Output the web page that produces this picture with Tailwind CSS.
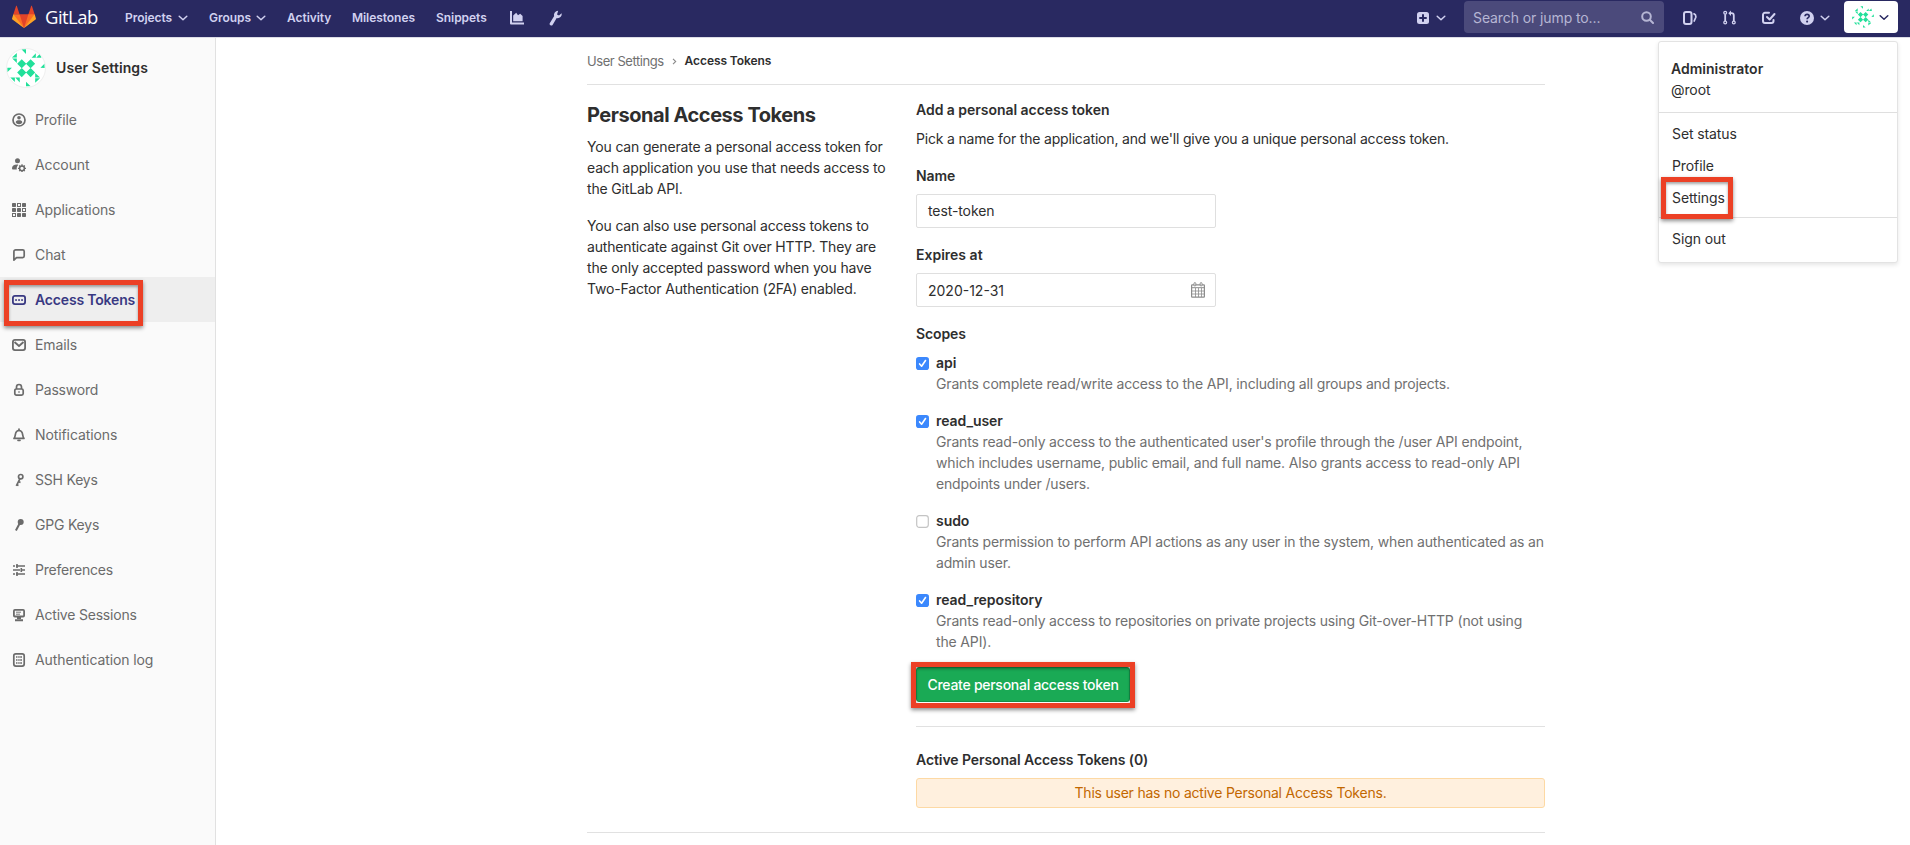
<!DOCTYPE html>
<html lang="en">
<head>
<meta charset="utf-8">
<title>Access Tokens · User Settings · GitLab</title>
<script src="https://cdn.jsdelivr.net/npm/@tailwindcss/browser@4"></script>
</head>
<body class="relative h-[845px] w-[1910px] overflow-hidden bg-white font-['Inter','Liberation_Sans',sans-serif] text-sm leading-[21px] tracking-[-0.1px] text-[#2e2e2e]">

<svg class="hidden">
  <symbol id="chev" viewBox="0 0 10 6"><path d="M1.2 1.2 5 4.7 8.8 1.2" fill="none" stroke="currentColor" stroke-width="1.5" stroke-linecap="round" stroke-linejoin="round"/></symbol>
  <symbol id="identicon" viewBox="0 0 116 116">
    <circle cx="58" cy="58" r="57.5" fill="#fff"/>
    <g fill="#22e09a">
      <path d="M45 31l14 14-14 14-14-14zM72 31l14 14-14 14-14-14zM45 58l14 14-14 14-14-14zM72 58l14 14-14 14-14-14z"/>
      <path d="M44 1h14v14zM30 12v14H15zM16 29h14v14zM75 27l13-14v14zM89 27l13-14 3 14zM102 57l13-13v14zM1 57h14L1 71zM10 87h14v14zM25 87h14v15zM86 73l15 14H86zM86 89l15 0-15 14zM58 100l14 14H58z"/>
    </g>
  </symbol>
</svg>

<header class="flex h-[38px] items-start border-b border-[#dcdce6] bg-[#292961] text-[#d1d1f0]">
  <div class="flex h-[37px] w-full items-center pl-3 pr-3">
    <svg class="mb-1 h-6 w-6" viewBox="0 0 36 36"><path fill="#e24329" d="M2 14l9.38 9v-9l-4-12.28c-.205-.632-1.176-.632-1.38 0zM34 14l-9.38 9v-9l4-12.28c.205-.632 1.176-.632 1.38 0zM18 34.38 3 14h30z"/><path fill="#fc6d26" d="M18 34.38 11.38 14H2l4 11zM18 34.38 24.62 14H34l-4 11z"/><path fill="#fca326" d="M2 14 .1 20.16c-.18.565 0 1.2.5 1.56L18.02 34.38zM34 14l1.9 6.16c.18.565 0 1.2-.5 1.56L18 34.38z"/></svg>
    <span class="ml-[9px] w-[80px] whitespace-nowrap pb-[4px] font-['Open_Sans',sans-serif] text-[18.5px] tracking-[-0.55px] text-white">GitLab</span>
    <nav class="flex flex-1 items-center whitespace-nowrap pb-[2px] text-xs font-semibold tracking-[-0.05px]">
      <a class="w-[53px]">Projects</a><svg class="mr-[21px] h-[6px] w-[10px]"><use href="#chev"/></svg>
      <a class="w-[47px]">Groups</a><svg class="mr-[21px] h-[6px] w-[10px]"><use href="#chev"/></svg>
      <a class="w-[65px]">Activity</a>
      <a class="w-[84px]">Milestones</a>
      <a class="w-[74px]">Snippets</a>
      <svg class="mr-[25px] h-[14px] w-[14px]" viewBox="0 0 14 14" fill="currentColor"><path d="M0 0h2v11.5h12v2H1A1 1 0 0 1 0 12.500z"/><path d="M3.200 10.300V4.500l3-2.700 1.800 2.400 2.200-1.400L12.600 5v5.300z"/></svg>
      <svg class="h-[16px] w-[13px]" viewBox="0 0 13 16"><path fill="currentColor" d="M9.200.8a4 4 0 0 0-4 5.300L.900 13a1.600 1.600 0 0 0 2.800 1.700l4-6.700A4 4 0 0 0 12.600 3.300L10 5.600 8 4.400z"/></svg>
    </nav>
    <div class="flex items-center pb-[2px]">
      <svg class="h-3 w-3" viewBox="0 0 12 12"><rect width="12" height="12" rx="2.500" fill="currentColor"/><path d="M6 3v6M3 6h6" stroke="#292961" stroke-width="2" stroke-linecap="round"/></svg>
      <svg class="ml-[7px] mr-[18px] h-[6px] w-[10px]"><use href="#chev"/></svg>
      <div class="mt-[-1px] flex h-8 w-[200px] items-center justify-between rounded bg-[#4b4a7b] pl-[9px] pr-[10px] text-[#b6b6d4]">
        <span class="tracking-[-0.1px]">Search or jump to...</span>
        <svg class="h-[13px] w-[13px]" viewBox="0 0 13 13" fill="none" stroke="currentColor" stroke-width="2" stroke-linecap="round"><circle cx="5.500" cy="5.500" r="4.300"/><path d="m9 9 3 3"/></svg>
      </div>
      <svg class="ml-[19px] h-[14px] w-[14px]" viewBox="0 0 14 14" fill="none" stroke="currentColor"><rect x="1" y="1" width="7.500" height="12" rx="2" stroke-width="2"/><path d="M11 2.800c1.800.8 2.100 2 1.700 3.700L11.200 10" stroke-width="1.700" stroke-linecap="round"/></svg>
      <svg class="ml-[26px] h-[15px] w-[13px]" viewBox="0 0 13 15" fill="none" stroke="currentColor" stroke-width="1.300"><circle cx="2.200" cy="2.800" r="1.400"/><circle cx="2.200" cy="12.500" r="1.400"/><circle cx="10.800" cy="12.500" r="1.400"/><path d="M2.200 4.200V11M10.800 11V5.500c0-1.600-.8-2.300-2.300-2.300H7" stroke-width="1.800"/><path d="M8 .5 5.300 3.200 8 5.900z" fill="currentColor" stroke="none"/></svg>
      <svg class="ml-[26px] h-[14px] w-[14px]" viewBox="0 0 14 14" fill="none" stroke="currentColor" stroke-width="2" stroke-linecap="round" stroke-linejoin="round"><path d="M7 1.800H3a2 2 0 0 0-2 2V10a2 2 0 0 0 2 2h6.500a2 2 0 0 0 2-2V9"/><path d="m5 6 2.600 2.500L12.500 3"/></svg>
      <svg class="ml-[24px] h-[14px] w-[14px]" viewBox="0 0 14 14"><circle cx="7" cy="7" r="7" fill="currentColor"/><path d="M5 5.300C5.100 4 6 3.400 7.100 3.400S9.200 4.100 9.200 5.200C9.200 6.700 7.100 6.600 7.100 8.300" fill="none" stroke="#292961" stroke-width="1.600"/><circle cx="7.100" cy="10.600" r="1.050" fill="#292961"/></svg>
      <svg class="ml-[6px] h-[6px] w-[10px]"><use href="#chev"/></svg>
      <div class="ml-[14px] mt-[-1px] flex h-8 w-[54px] items-center rounded bg-white pl-[8px] text-[#292961]">
        <svg class="h-[22px] w-[22px]"><use href="#identicon"/></svg>
        <svg class="ml-[5px] h-[7px] w-[10px]" viewBox="0 0 10 6"><use href="#chev"/></svg>
      </div>
    </div>
  </div>
</header>

<div class="flex h-[807px]">
  <aside class="w-[216px] border-r border-[#e1e1e1] bg-[#fafafa] text-[#6b6b6b]">
    <div class="flex h-[59px] items-center pl-[6px] text-[#2e2e2e]">
      <svg class="h-10 w-10 rounded-full border border-[#f0f0f0]"><use href="#identicon"/></svg>
      <span class="ml-[10px] font-semibold tracking-[0.08px]">User Settings</span>
    </div>
    <ul class="[&>li]:flex [&>li]:h-[45px] [&>li]:items-center [&>li]:gap-[9px] [&>li]:pl-3 [&_svg]:h-[14px] [&_svg]:w-[14px]">
      <li><svg viewBox="0 0 14 14" fill="currentColor"><circle cx="7" cy="7" r="6" fill="none" stroke="currentColor" stroke-width="1.700"/><circle cx="7" cy="4.700" r="1.800"/><path d="M3.700 9.300C4 7.900 5 7.300 7 7.300s3 .6 3.300 2c-.5 1.300-1.500 1.900-3.300 1.900s-2.800-.6-3.300-1.900z"/></svg><span>Profile</span></li>
      <li><svg viewBox="0 0 14 14" fill="currentColor"><circle cx="5.500" cy="2.800" r="2.500"/><path d="M5.800 6.500C2 6.300 0 7.900 0 10.300c0 .8.500 1.200 1.200 1.200h3.600c-.3-2 .1-3.500 1.400-4.600z"/><circle cx="10" cy="10.300" r="2.400" fill="none" stroke="currentColor" stroke-width="1.500"/><path d="M10 6.300v2M10 12.300v2M6 10.300h2M12 10.300h2M7.200 7.500l1.300 1.300M11.500 11.800l1.300 1.300M12.800 7.500l-1.300 1.300M8.500 11.800l-1.300 1.300" stroke="currentColor" stroke-width="1.300"/></svg><span>Account</span></li>
      <li><svg viewBox="0 0 14 14" fill="currentColor"><rect width="4" height="4" rx=".7"/><rect x="10" width="4" height="4" rx=".7"/><rect y="5" width="4" height="4" rx=".7"/><rect x="5" y="5" width="4" height="4" rx=".7"/><rect x="5" y="10" width="4" height="4" rx=".7"/><rect x="10" y="10" width="4" height="4" rx=".7"/><g fill="none" stroke="currentColor"><rect x="5.500" y=".5" width="3" height="3"/><rect x="10.500" y="5.500" width="3" height="3"/><rect x=".5" y="10.500" width="3" height="3"/></g></svg><span>Applications</span></li>
      <li><svg viewBox="0 0 14 14" fill="none" stroke="currentColor" stroke-width="1.700" stroke-linejoin="round"><path d="M1.900 12.200V3.700A1.800 1.800 0 0 1 3.700 1.900h7a1.500 1.500 0 0 1 1.500 1.500v4.700a1.500 1.500 0 0 1-1.500 1.500H4.500z"/></svg><span>Chat</span></li>
      <li class="bg-[#eeeeee] font-semibold tracking-[-0.17px] text-[#393982]"><svg viewBox="0 0 14 14" fill="currentColor"><rect x=".9" y="2.900" width="12.200" height="8.200" rx="2" fill="none" stroke="currentColor" stroke-width="1.800"/><rect x="3.200" y="6.200" width="1.700" height="1.700"/><rect x="6.200" y="6.200" width="1.700" height="1.700"/><rect x="9.200" y="6.200" width="1.700" height="1.700"/></svg><span>Access Tokens</span></li>
      <li><svg viewBox="0 0 14 14" fill="none" stroke="currentColor" stroke-width="1.800" stroke-linejoin="round"><rect x=".9" y="1.900" width="12.200" height="10.200" rx="2"/><path d="m2.500 4 4.500 4 4.500-4"/></svg><span>Emails</span></li>
      <li><svg viewBox="0 0 14 14" fill="none" stroke="currentColor" stroke-width="1.700"><rect x="2.800" y="6" width="8.400" height="6.200" rx="1.600"/><path d="M4.500 6V4a2.500 2.500 0 0 1 5 0v2"/><path d="M7 8v2" stroke-width="1"/></svg><span class="tracking-[-0.2px]">Password</span></li>
      <li><svg viewBox="0 0 14 14" fill="none" stroke="currentColor" stroke-width="1.700" stroke-linejoin="round"><path d="M2 10.400c.9-.9 1-2 1.300-3.600C3.700 4 5 2.500 7 2.500S10.300 4 10.700 6.800c.3 1.600.4 2.700 1.300 3.600z"/><path d="M7 1v1.500M6 12.300h2" stroke-linecap="round"/></svg><span>Notifications</span></li>
      <li><svg viewBox="0 0 14 14" fill="none" stroke="currentColor" stroke-width="1.700"><circle cx="8.700" cy="3.700" r="2.200"/><path d="M7.900 5.800 4.300 12.800M6.300 8.500l2.200 1M4.500 11.600l2 1"/></svg><span class="tracking-[-0.2px]">SSH Keys</span></li>
      <li><svg viewBox="0 0 14 14" fill="currentColor"><circle cx="8.700" cy="3.900" r="3"/><path d="m7.600 5.500-3.700 7" stroke="currentColor" stroke-width="2"/></svg><span class="tracking-[-0.2px]">GPG Keys</span></li>
      <li><svg viewBox="0 0 14 14" fill="none" stroke="currentColor" stroke-width="1.600"><path d="M1 3h2M4 3h9M5 1v4M1 7h7M10 7h3M9.300 5v4M1 11h2M4 11h9M5 9v4"/></svg><span class="tracking-[-0.2px]">Preferences</span></li>
      <li><svg viewBox="0 0 14 14" fill="none" stroke="currentColor"><rect x="1.900" y="1.900" width="10.200" height="6.600" rx="1" stroke-width="1.800"/><path d="M4 4.200h5M4 6.200h4" stroke-width=".9"/><path d="M5 10h4M3 12.200h8" stroke-width="1.900"/></svg><span class="tracking-[-0.2px]">Active Sessions</span></li>
      <li><svg viewBox="0 0 14 14" fill="none" stroke="currentColor"><rect x="1.800" y=".9" width="10.400" height="12.200" rx="2" stroke-width="1.700"/><path d="M4 4h1.500M6.200 4H10M4 7h1.500M6.200 7H10M4 10h1.500M6.200 10H10" stroke-width="1.400"/><path d="M7.900 3v8" stroke="#fafafa" stroke-width=".5"/></svg><span>Authentication log</span></li>
    </ul>
  </aside>

  <main class="ml-[371px] w-[958px]">
    <div class="flex h-[47px] items-center border-b border-[#e1e1e1] text-[13px] tracking-[-0.45px]">
      <span class="text-[#707070]">User Settings</span>
      <svg class="mx-[8px] h-[7px] w-[5px]" viewBox="0 0 5 7"><path d="m1 .8 2.700 2.700L1 6.200" fill="none" stroke="#8a8a8a" stroke-width="1.100"/></svg>
      <span class="text-xs font-semibold tracking-[-0.08px]">Access Tokens</span>
    </div>
    <div class="flex border-b border-[#e1e1e1]">
      <section class="w-[329px] pt-[17px] tracking-[-0.165px]">
        <h1 class="text-xl font-bold leading-[26px] tracking-[-0.45px]">Personal Access Tokens</h1>
        <p class="mt-2">You can generate a personal access token for<br>each application you use that needs access to<br>the GitLab API.</p>
        <p class="mt-4">You can also use personal access tokens to<br>authenticate against Git over HTTP. They are<br>the only accepted password when you have<br>Two-Factor Authentication (2FA) enabled.</p>
      </section>
      <section class="w-[629px] pt-[14px]">
        <h2 class="font-semibold tracking-[-0.04px]">Add a personal access token</h2>
        <p class="mt-2 tracking-[-0.18px]">Pick a name for the application, and we'll give you a unique personal access token.</p>
        <label class="mt-4 block font-semibold">Name</label>
        <div class="mt-[8px] flex h-[34px] w-[300px] items-center rounded-[2px] border border-[#dfdfdf] px-[11px] pb-px">test-token</div>
        <label class="mt-4 block font-semibold tracking-[0px]">Expires at</label>
        <div class="mt-[8px] flex h-[34px] w-[300px] items-center justify-between rounded-[2px] border border-[#dfdfdf] pl-[11px] pr-[10px] tracking-[0px]">2020-12-31
          <svg class="h-4 w-[14px]" viewBox="0 0 14 16" fill="none" stroke="#8c8c8c"><rect x=".6" y="2.800" width="12.800" height="12.400" rx=".6" stroke-width="1.200"/><path d="M1 5.700h12" stroke-width="1"/><path d="M1 9h12M1 12h12M4.500 6v9M7.500 6v9M10.500 6v9" stroke-width=".8"/><rect x="3" y=".6" width="1.800" height="3.400" rx=".9" fill="#fff"/><rect x="9.200" y=".6" width="1.800" height="3.400" rx=".9" fill="#fff"/></svg>
        </div>
        <div class="mt-4 font-semibold">Scopes</div>
        <div class="mt-2 grid grid-cols-[13px_1fr] gap-x-[7px] tracking-[-0.155px] [&>b]:tracking-[-0.05px] [&>svg]:mt-[5px] [&>svg]:h-[13px] [&>svg]:w-[13px]">
          <svg viewBox="0 0 13 13"><use href="#on"/></svg><b class="font-semibold">api</b>
          <p class="col-start-2 mb-4 text-[#707070]">Grants complete read/write access to the API, including all groups and projects.</p>
          <svg viewBox="0 0 13 13"><use href="#on"/></svg><b class="font-semibold">read_user</b>
          <p class="col-start-2 mb-4 text-[#707070]">Grants read-only access to the authenticated user's profile through the /user API endpoint,<br>which includes username, public email, and full name. Also grants access to read-only API<br>endpoints under /users.</p>
          <svg viewBox="0 0 13 13"><rect x=".7" y=".7" width="11.600" height="11.600" rx="2.500" fill="#fff" stroke="#c4c4c4" stroke-width="1.200"/></svg><b class="font-semibold">sudo</b>
          <p class="col-start-2 mb-4 whitespace-nowrap text-[#707070]">Grants permission to perform API actions as any user in the system, when authenticated as an<br>admin user.</p>
          <svg viewBox="0 0 13 13"><use href="#on"/></svg><b class="font-semibold">read_repository</b>
          <p class="col-start-2 text-[#707070]">Grants read-only access to repositories on private projects using Git-over-HTTP (not using<br>the API).</p>
        </div>
        <button class="mt-[15px] flex h-[35px] w-[214px] items-center justify-center whitespace-nowrap rounded-[3px] border border-[#168f48] bg-[#1aaa55] font-medium tracking-[-0.27px] text-white">Create personal access token</button>
        <div class="mt-[24px] border-t border-[#e1e1e1] pt-[22px] font-semibold tracking-[-0.08px]">Active Personal Access Tokens (0)</div>
        <div class="mb-[24px] mt-[8px] flex h-[30px] items-center justify-center rounded-[3px] border border-[#fdd9a4] bg-[#fff0de] pb-px tracking-[-0.22px] text-[#c26700]">This user has no active Personal Access Tokens.</div>
      </section>
    </div>
  </main>
</div>

<svg class="hidden"><symbol id="on" viewBox="0 0 13 13"><rect width="13" height="13" rx="2.800" fill="#3b88fd"/><path d="m3.600 6.900 2 2.300 3.900-5.700" fill="none" stroke="#fff" stroke-width="1.600" stroke-linecap="round" stroke-linejoin="round"/></symbol></svg>

<!-- User menu -->
<div class="absolute left-[1658px] top-[41px] h-[222px] w-[240px] rounded-[3px] border border-[#e3e3e3] bg-white px-[13px] shadow-[0_2px_4px_rgba(0,0,0,0.1)]">
  <div class="-mx-[13px] h-[71px] border-b border-[#dfdfdf] pl-[12px] pt-[16px]"><div class="font-semibold tracking-[0px]">Administrator</div><div>@root</div></div>
  <div class="-mx-[13px] h-[105px] border-b border-[#dfdfdf] pl-[13px] pt-[5px] leading-8"><div>Set status</div><div>Profile</div><div>Settings</div></div>
  <div class="pt-[10px]">Sign out</div>
</div>

<!-- Callout frames -->
<div class="absolute left-[4px] top-[280px] h-[46px] w-[139px] border-5 border-[#ec4025] shadow-[0_2px_4px_rgba(0,0,0,0.45),inset_0_2px_3px_rgba(0,0,0,0.35)]"></div>
<div class="absolute left-[1661px] top-[177px] h-[42px] w-[72px] border-5 border-[#ec4025] shadow-[0_2px_4px_rgba(0,0,0,0.45),inset_0_2px_3px_rgba(0,0,0,0.35)]"></div>
<div class="absolute left-[911px] top-[662px] h-[46px] w-[224px] border-5 border-[#ec4025] shadow-[0_2px_4px_rgba(0,0,0,0.45),inset_0_2px_3px_rgba(0,0,0,0.35)]"></div>
</body>
</html>
